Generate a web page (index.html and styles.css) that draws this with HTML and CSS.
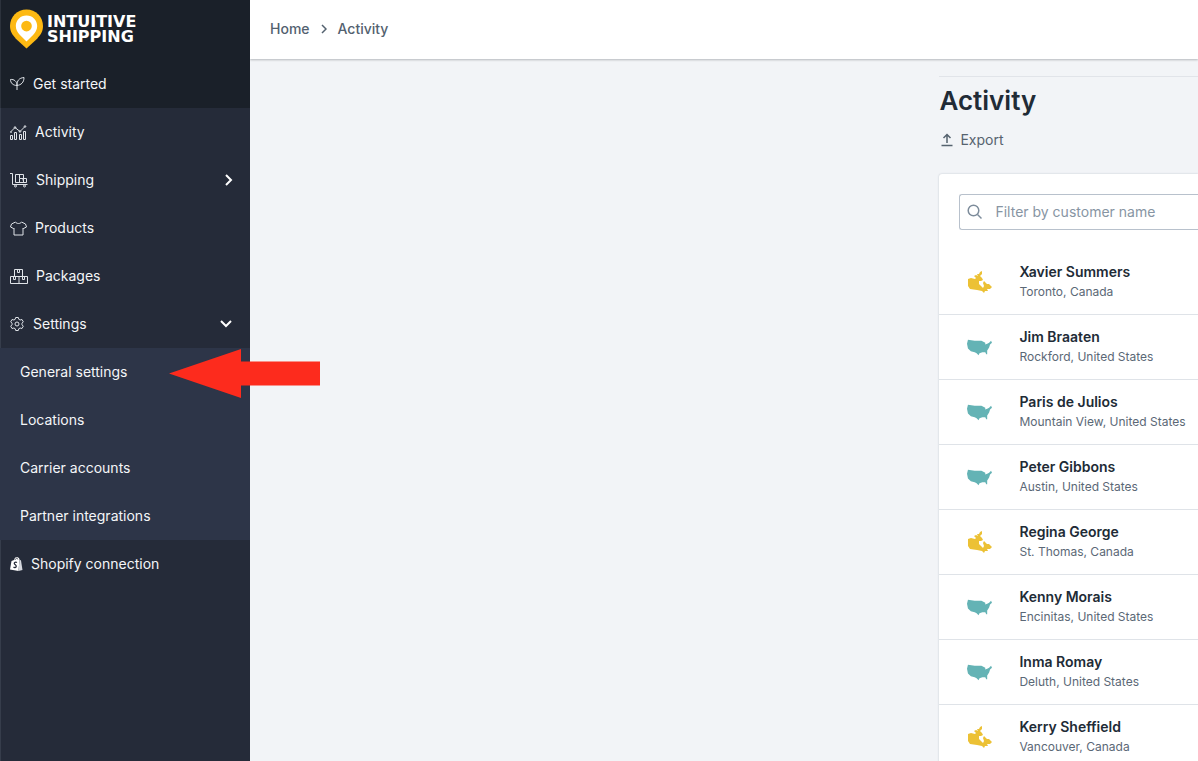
FILE: index.html
```html
<!DOCTYPE html>
<html lang="en">
<head>
<meta charset="utf-8">
<meta name="viewport" content="width=device-width, initial-scale=1">
<title>Activity - Intuitive Shipping</title>
<link rel="stylesheet" href="styles.css">
</head>
<body>
<svg class="symbols" aria-hidden="true">
  <symbol id="canada" viewBox="0 0 25 23">
    <path d="M1 8 4 7 8 8 9 7 7 5 9 4 11 5 10 3 12 3 13 1 15 0 15 3 13 5 15 7 16 9 14 10 12 10 12 13 14 15 16 17 17 15 16 12 17 10 20 13 22 13 25 16 23 18 20 18 21 20 18 20 17 22 15 20 10 19 3 18 1 15Z"/>
  </symbol>
  <symbol id="usa" viewBox="0 0 26 16">
    <path d="M1 0 8 1 15 1 17 2 19 3 19 5 21 4 23 3 25 1 26 3 24 5 23 8 21 11 21 15 20 15 19 13 16 13 13 14 12 16 10 14 8 13 4 12 1 9 0 4Z"/>
  </symbol>
</svg>
<div class="app">
  <aside class="sidebar">
    <div class="sidebar-top">
      <a class="logo" href="#">
        <svg class="logo-pin" viewBox="0 0 34 40" aria-hidden="true"><path fill="#fdb913" d="M17 0C7.500 0 0 7.500 0 17c0 6 3 9.500 6 13l11 10 11-10c3-3.500 6-7 6-13C34 7.500 26.500 0 17 0Z"/><path fill="#fff" d="M17 6C10.500 6 6 11 6 17c0 4 2 6.500 4 9l7 7 7-7c2-2.500 4-5 4-9 0-6-4.500-11-11-11Z"/><circle cx="17" cy="17" r="5.500" fill="#fdb913"/></svg>
        <span class="logo-text">INTUITIVE<br>SHIPPING</span>
      </a>
      <a class="nav-item" href="#"><svg class="icon" width="15" height="14" viewBox="0 0 15 14" aria-hidden="true"><path d="M7 13V8C7 4.500 4 2 .5 2.500 .5 6 3 8.500 7 8.500M7 8.500c0-5 2-7.500 7-8C14 5.500 11 8 7 8.500"/></svg>Get started</a>
    </div>
    <nav class="nav">
      <a class="nav-item" href="#"><svg class="icon" width="17" height="15" viewBox="0 0 17 15" aria-hidden="true"><path d="M.5 14.500v-4h2v4zM4.500 14.500v-7h2v7zM9.500 14.500v-5h2v5zM13.500 14.500v-8h2v8zM1 6.500l4-4 5 4 5-5"/><circle cx="1" cy="7" r=".5"/><circle cx="5" cy="2.500" r=".8"/><circle cx="10" cy="6.500" r=".8"/><circle cx="15" cy="1.500" r=".8"/></svg>Activity</a>
      <a class="nav-item" href="#"><svg class="icon" width="18" height="15" viewBox="0 0 18 15" aria-hidden="true"><path d="M0 .5h2.500v11h15M5.500 1.500h8v8h-8zM9.500 1.500v4M9.500 5.500h7v4h-7zM13 5.500v2"/><circle cx="5.500" cy="13" r="1"/><circle cx="14.500" cy="13" r="1"/></svg>Shipping<svg class="chevron" width="12" height="12" viewBox="0 0 12 12" aria-hidden="true"><path d="m4 1 5 5-5 5"/></svg></a>
      <a class="nav-item" href="#"><svg class="icon" width="17" height="15" viewBox="0 0 17 15" aria-hidden="true"><path d="M5.500 1 1.500 3 .5 6l3 1.500.5-.5v7h9V7l.5.500 3-1.500-1-3-4-2c-1 2-5 2-6 0Z"/></svg>Products</a>
      <a class="nav-item" href="#"><svg class="icon" width="18" height="15" viewBox="0 0 18 15" aria-hidden="true"><path d="M4.500 7.500v-7h8v7M.5 7.500h17v7H.5zM9 7.500v7M7.500.5v3h2v-3M3.500 7.500v3h2v-3M12.500 7.500v3h2v-3"/></svg>Packages</a>
      <a class="nav-item" href="#"><svg class="icon" width="15" height="14" viewBox="0 0 15 14" aria-hidden="true"><path d="M5.700.5h2.600l.5 1.800 1.300.7 1.900-.5 1.300 2.300-1.300 1.400v1.600l1.300 1.400-1.300 2.300-1.900-.5-1.300.7-.5 1.800H5.700l-.5-1.800-1.300-.7-1.900.5L.7 9.200 2 7.800V6.200L.7 4.800 2 2.500l1.900.5 1.300-.7Z"/><circle cx="7" cy="7" r="2"/></svg>Settings<svg class="chevron" width="14" height="12" viewBox="0 0 14 12" aria-hidden="true"><path d="m1 3 5 5 5-5"/></svg></a>
      <div class="subnav">
        <a class="nav-item sub-item" href="#">General settings</a>
        <a class="nav-item sub-item" href="#">Locations</a>
        <a class="nav-item sub-item" href="#">Carrier accounts</a>
        <a class="nav-item sub-item" href="#">Partner integrations</a>
      </div>
      <a class="nav-item" href="#"><svg width="13" height="14" viewBox="0 0 13 14" aria-hidden="true"><path fill="#fff" d="M1.500 4 4 3C4.500 1 5.500 0 7 0l2 1 .5 1.500L8.500 14 0 12.500Z"/><path fill="#d5d8de" d="m9.500 2.500 1.500 1L12.500 13l-4 1Z"/><path fill="none" stroke="#252b39" stroke-width="1.300" d="M7 5.500C5 4.500 3.800 6 4.500 7s2 1.300 1.700 2.500S4.500 11 3.500 10"/><path fill="none" stroke="#252b39" stroke-width=".7" d="M5 3c.5-1.500 1.500-2 2-2l.8 1.500"/></svg>Shopify connection</a>
    </nav>
    <svg class="pointer" viewBox="0 0 151 49" role="img" aria-label="Arrow pointing to General settings"><path d="M0 24.500 72 0v12.500h79v24H72V49Z"/></svg>
  </aside>
  <div class="page">
    <header class="topbar">
      <a href="#">Home</a>
      <svg width="6" height="10" viewBox="0 0 6 10" aria-hidden="true"><path d="m1 1 4 4-4 4"/></svg>
      <a href="#">Activity</a>
    </header>
    <main class="content">
      <section class="panel">
        <h1 class="title">Activity</h1>
        <button class="export" type="button"><svg width="12" height="14" viewBox="0 0 12 14" aria-hidden="true"><path d="M6 10V1.500M2.500 5 6 1.500 9.500 5M.5 12.500h11"/></svg>Export</button>
        <div class="card">
          <label class="search">
            <svg width="16" height="16" viewBox="0 0 16 16" aria-hidden="true"><circle cx="6.500" cy="6.500" r="5.300"/><path d="m10.500 10.500 4 4"/></svg>
            <input type="search" placeholder="Filter by customer name" aria-label="Filter by customer name">
          </label>
          <ul class="customers">
            <li class="customer"><svg class="map canada"><use href="#canada"/></svg><div><a class="name" href="#">Xavier Summers</a><p class="place">Toronto, Canada</p></div></li>
            <li class="customer"><svg class="map usa"><use href="#usa"/></svg><div><a class="name" href="#">Jim Braaten</a><p class="place">Rockford, United States</p></div></li>
            <li class="customer"><svg class="map usa"><use href="#usa"/></svg><div><a class="name" href="#">Paris de Julios</a><p class="place">Mountain View, United States</p></div></li>
            <li class="customer"><svg class="map usa"><use href="#usa"/></svg><div><a class="name" href="#">Peter Gibbons</a><p class="place">Austin, United States</p></div></li>
            <li class="customer"><svg class="map canada"><use href="#canada"/></svg><div><a class="name" href="#">Regina George</a><p class="place">St. Thomas, Canada</p></div></li>
            <li class="customer"><svg class="map usa"><use href="#usa"/></svg><div><a class="name" href="#">Kenny Morais</a><p class="place">Encinitas, United States</p></div></li>
            <li class="customer"><svg class="map usa"><use href="#usa"/></svg><div><a class="name" href="#">Inma Romay</a><p class="place">Deluth, United States</p></div></li>
            <li class="customer"><svg class="map canada"><use href="#canada"/></svg><div><a class="name" href="#">Kerry Sheffield</a><p class="place">Vancouver, Canada</p></div></li>
          </ul>
        </div>
      </section>
    </main>
  </div>
</div>
</body>
</html>
```

FILE: styles.css
```css
* { box-sizing: border-box; }
body {
  margin: 0;
  background: #f2f4f7;
  color: #212b36;
  font: 14px/20px Inter, "Liberation Sans", sans-serif;
}
a { color: inherit; text-decoration: none; }
svg { flex: none; }
.symbols { position: absolute; width: 0; height: 0; }
.app { display: flex; height: 100vh; overflow: hidden; }

.sidebar {
  position: relative;
  flex: none;
  width: 250px;
  background: #252b39;
  color: #f4f6f8;
  box-shadow: inset 1px 0 #363d4b;
}
.sidebar-top { background: #1a2029; box-shadow: inset 1px 0 #2c323c; }
.logo { display: flex; align-items: center; gap: 4px; height: 60px; padding: 0 10px 2px; }
.logo-pin { width: 33px; height: 40px; }
.logo-text { color: #fff; font: 700 16px/15px "DejaVu Sans", Inter, sans-serif; }
.nav-item { display: flex; align-items: center; gap: 8px; height: 48px; padding: 0 16px 0 10px; }
.icon { fill: none; stroke: #dfe3e8; stroke-width: 1; stroke-linejoin: round; }
.chevron { margin-left: auto; fill: none; stroke: #fff; stroke-width: 2; }
.subnav { background: #2d3548; }
.sub-item { padding-left: 20px; }
.pointer { position: absolute; z-index: 2; left: 169px; top: 349px; width: 151px; height: 49px; fill: #fd2b1d; }

.page { display: flex; flex: 1; flex-direction: column; min-width: 0; }
.topbar {
  display: flex;
  flex: none;
  align-items: center;
  gap: 11px;
  height: 59px;
  padding: 0 20px 2px;
  background: #fff;
  box-shadow: 0 1px 2px #b4b8bc;
  color: #53616f;
  font-weight: 500;
}
.topbar svg { fill: none; stroke: #53616f; stroke-width: 1.5; }
.content { display: grid; grid-template-columns: 8fr 3fr; padding-top: 17px; }
.panel { grid-column: 2; min-width: 0; border-top: 1px solid #e1e4e9; }
.title { margin: 10px 0; font-size: 26px; font-weight: 600; line-height: 28px; }
.export {
  display: flex;
  align-items: center;
  gap: 7px;
  margin: 0 0 19px;
  padding: 5px 2px;
  border: 0;
  background: none;
  color: #56636f;
  font: inherit;
}
.export svg { fill: none; stroke: #56636f; stroke-width: 1.5; }
.card {
  padding-top: 20px;
  border-radius: 3px 0 0;
  background: #fff;
  box-shadow: 0 0 2px #b9c0ca;
}
.search {
  display: flex;
  align-items: center;
  gap: 12px;
  height: 36px;
  margin: 0 0 20px 20px;
  padding-left: 7px;
  border: 1px solid #b8c1cc;
  border-right: 0;
  border-radius: 3px 0 0 3px;
}
.search svg { fill: none; stroke: #7d8c9b; stroke-width: 1.5; }
.search input { flex: 1; min-width: 0; padding: 0; border: 0; outline: 0; background: none; color: #212b36; font: inherit; }
.search input::placeholder { color: #8795a3; opacity: 1; }
.customers { margin: 0; padding: 0; list-style: none; }
.customer { display: flex; align-items: center; gap: 27px; padding: 12px 0 12px 28px; border-bottom: 1px solid #dfe3e8; }
.map { width: 25px; height: 23px; }
.canada { fill: #ecc135; }
.usa { fill: #64b3b5; }
.name { display: block; font-weight: 600; }
.place { margin: 0; color: #5b6876; font-size: 12px; }
```
